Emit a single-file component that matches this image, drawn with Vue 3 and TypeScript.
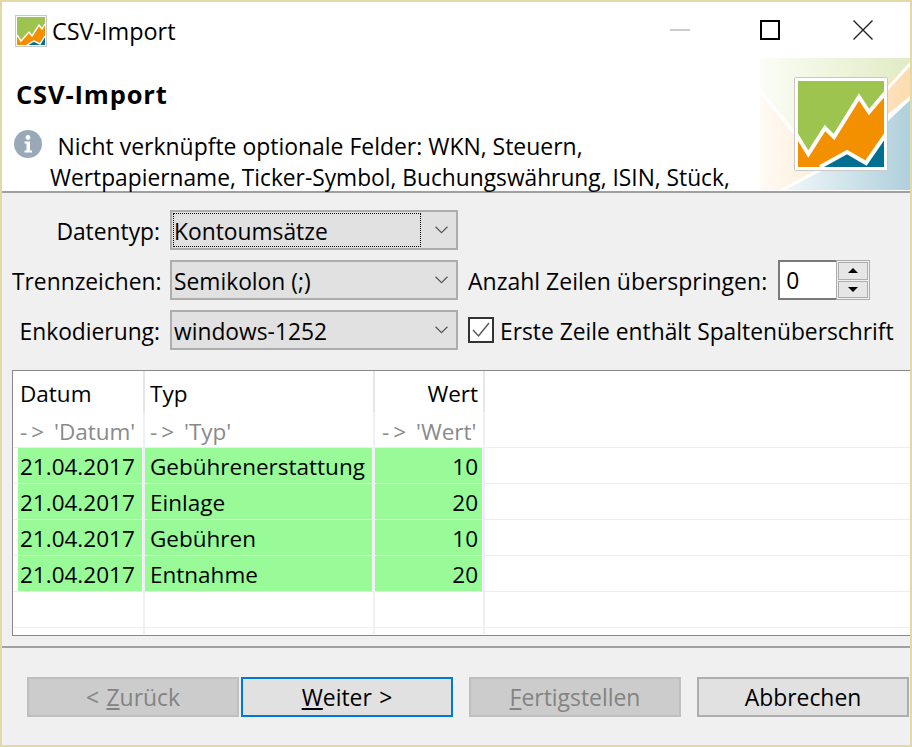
<template>
  <div class="dialog">
    <div class="titlebar">
      <svg class="app-icon" viewBox="0 0 32 32">
        <rect x="0.5" y="0.5" width="31" height="31" fill="#fff" stroke="#c8c8c8" />
        <svg x="2" y="2" width="28" height="28" viewBox="0 0 28 28">
          <rect width="28" height="28" fill="#9cc44e" />
          <path d="M0 18 L4 24 L12 15 L15 19 L22 8 L25 12 L28 7 V28 H0 Z" fill="#f39000" />
          <path d="M10 28 L17 24 L23 27 L28 19 V28 Z" fill="#006f91" />
          <path d="M0 18 L4 24 L12 15 L15 19 L22 8 L25 12 L28 7 M10 28 L17 24 L23 27 L28 19" fill="none" stroke="#fff" stroke-width="1.4" />
        </svg>
      </svg>
      <span class="window-title">CSV-Import</span>
      <div class="window-buttons">
        <span class="win-min"></span>
        <span class="win-max"></span>
        <svg class="win-close" viewBox="0 0 20 20">
          <path d="M0.5 0.5 L19.5 19.5 M19.5 0.5 L0.5 19.5" stroke="#222" stroke-width="1.4" fill="none" />
        </svg>
      </div>
    </div>

    <div class="header">
      <div class="header-text">
        <h1>CSV-Import</h1>
        <div class="message">
          <svg class="info-icon" viewBox="0 0 28 28">
            <circle cx="14" cy="14" r="14" fill="#9aa9b8" />
            <circle cx="14" cy="7.5" r="2.4" fill="#fff" />
            <path d="M10.5 11.5 H16 V20.5 H18 V22.5 H10.5 V20.5 H12.5 V13.5 H10.5 Z" fill="#fff" />
          </svg>
          <p>Nicht verknüpfte optionale Felder: WKN, Steuern,<br />Wertpapiername, Ticker-Symbol, Buchungswährung, ISIN, Stück,</p>
        </div>
      </div>
      <svg class="banner" viewBox="0 0 150 132" preserveAspectRatio="none">
        <defs>
          <linearGradient id="bannerGreen" x1="0" y1="0" x2="1" y2="0">
            <stop offset="0" stop-color="#fbfdf6" />
            <stop offset="1" stop-color="#e0ecc4" />
          </linearGradient>
          <linearGradient id="bannerOrange" x1="0" y1="0" x2="1" y2="0">
            <stop offset="0" stop-color="#fffaf4" />
            <stop offset="1" stop-color="#fcdcb0" />
          </linearGradient>
          <linearGradient id="bannerBlue" x1="0" y1="0" x2="1" y2="0">
            <stop offset="0" stop-color="#f2f8fa" />
            <stop offset="1" stop-color="#afd0dc" />
          </linearGradient>
        </defs>
        <rect width="150" height="132" fill="#fff" />
        <path d="M0 0 H150 V5 L100 60 L40 80 L0 30 Z" fill="url(#bannerGreen)" />
        <path d="M0 36 L40 84 L150 8 V38 L60 112 L22 132 H0 Z" fill="url(#bannerOrange)" />
        <path d="M23 132 L60 112 L128 63 L150 42 V132 Z" fill="url(#bannerBlue)" />
        <path d="M0 33 L40 82 L110 50 L150 6 M22 132 L60 112 L128 60 L150 40" fill="none" stroke="#fff" stroke-width="3" />
      </svg>
      <div class="banner-logo">
        <svg viewBox="0 0 94 94">
          <rect x="0.5" y="0.5" width="93" height="93" rx="1" fill="#fff" stroke="#c8c8c8" />
          <svg x="4" y="4" width="86" height="86" viewBox="0 0 86 86">
            <rect width="86" height="86" fill="#9cc44e" />
            <path d="M0 56 L10.3 73 L27 47 L36 56 L61 16 L71 31 L88 11 V86 H0 Z" fill="#f39000" />
            <path d="M22 86 L49 71 L68 82 L88 53 V86 Z" fill="#006f91" />
            <path d="M-2 53 L10.3 73 L27 47 L36 56 L61 16 L71 31 L88 11 M22 86 L49 71 L68 82 L88 53" fill="none" stroke="#fff" stroke-width="4" />
          </svg>
        </svg>
      </div>
    </div>

    <div class="content">
      <div class="form">
        <label class="field-label">Datentyp:</label>
        <div class="combo">
          <span class="combo-value focused">Kontoumsätze</span>
          <svg class="chevron" viewBox="0 0 12 7"><path d="M0.5 0.5 L6 6 L11.5 0.5" /></svg>
        </div>
        <div></div>

        <label class="field-label">Trennzeichen:</label>
        <div class="combo">
          <span class="combo-value">Semikolon (;)</span>
          <svg class="chevron" viewBox="0 0 12 7"><path d="M0.5 0.5 L6 6 L11.5 0.5" /></svg>
        </div>
        <div class="option">
          <span class="skip-label">Anzahl Zeilen überspringen:</span>
          <div class="spinner">
            <span class="spinner-value">0</span>
            <div class="spinner-buttons">
              <span class="spin-btn"><i class="arrow-up"></i></span>
              <span class="spin-btn"><i class="arrow-down"></i></span>
            </div>
          </div>
        </div>

        <label class="field-label">Enkodierung:</label>
        <div class="combo">
          <span class="combo-value">windows-1252</span>
          <svg class="chevron" viewBox="0 0 12 7"><path d="M0.5 0.5 L6 6 L11.5 0.5" /></svg>
        </div>
        <div class="option check-option">
          <svg class="checkbox" viewBox="0 0 26 26">
            <rect x="1" y="1" width="24" height="24" fill="#fff" stroke="#333" stroke-width="2" />
            <path d="M5 13 L10.5 19 L21 6" fill="none" stroke="#555" stroke-width="1.4" />
          </svg>
          <span class="check-label">Erste Zeile enthält Spaltenüberschrift</span>
        </div>
      </div>

      <div class="table">
        <div class="row head">
          <div v-for="col in columns" :key="col.name" class="cell" :class="{ right: col.right }">{{ col.name }}</div>
          <div class="cell filler"></div>
        </div>
        <div class="row mapping">
          <div v-for="col in columns" :key="col.name" class="cell" :class="{ right: col.right }">
            <span class="arrow">-&gt;</span> '{{ col.name }}'
          </div>
          <div class="cell filler"></div>
        </div>
        <div v-for="row in rows" :key="row.typ" class="row data">
          <div class="cell"><span class="ok">{{ row.datum }}</span></div>
          <div class="cell"><span class="ok">{{ row.typ }}</span></div>
          <div class="cell right"><span class="ok">{{ row.wert }}</span></div>
          <div class="cell filler"></div>
        </div>
        <div class="row data">
          <div class="cell"></div>
          <div class="cell"></div>
          <div class="cell"></div>
          <div class="cell filler"></div>
        </div>
        <div class="row tail">
          <div class="cell"></div>
          <div class="cell"></div>
          <div class="cell"></div>
          <div class="cell filler"></div>
        </div>
      </div>
    </div>

    <div class="footer">
      <button class="btn disabled" type="button">&lt; <u>Z</u>urück</button>
      <button class="btn primary" type="button"><u>W</u>eiter &gt;</button>
      <button class="btn disabled spaced" type="button"><u>F</u>ertigstellen</button>
      <button class="btn spaced" type="button">Abbrechen</button>
    </div>
  </div>
</template>

<script setup lang="ts">
const columns = [
  { name: 'Datum', right: false },
  { name: 'Typ', right: false },
  { name: 'Wert', right: true },
]

const rows = [
  { datum: '21.04.2017', typ: 'Gebührenerstattung', wert: '10' },
  { datum: '21.04.2017', typ: 'Einlage', wert: '20' },
  { datum: '21.04.2017', typ: 'Gebühren', wert: '10' },
  { datum: '21.04.2017', typ: 'Entnahme', wert: '20' },
]
</script>

<style>
html,
body {
  margin: 0;
  background: #f0f0f0;
}
</style>

<style scoped>
.dialog {
  box-sizing: border-box;
  width: 912px;
  height: 747px;
  display: flex;
  flex-direction: column;
  border: 2px solid #e2d9a9;
  background: #f0f0f0;
  color: #000;
  font-family: 'Open Sans', 'Noto Sans', sans-serif;
  font-size: 22.8px;
  overflow: hidden;
}

.titlebar {
  height: 56px;
  display: flex;
  align-items: center;
  background: #fff;
  padding-left: 13px;
  flex-shrink: 0;
}

.app-icon {
  width: 32px;
  height: 32px;
  margin-right: 5px;
  margin-top: 2px;
}

.window-title {
  margin-top: 1px;
  font-size: 23.4px;
}

.window-buttons {
  margin-left: auto;
  display: flex;
  align-items: center;
  height: 100%;
}

.win-min {
  width: 20px;
  height: 2px;
  background: #ccc;
  margin-right: 70px;
}

.win-max {
  box-sizing: border-box;
  width: 20px;
  height: 20px;
  border: 2px solid #000;
  margin-right: 73px;
}

.win-close {
  width: 20px;
  height: 20px;
  margin-right: 37px;
}

.header {
  position: relative;
  height: 133px;
  background: #fff;
  border-bottom: 2px solid #a0a0a0;
  display: flex;
  align-items: flex-start;
  flex-shrink: 0;
}

.header-text {
  flex: 1;
  padding-left: 12px;
  min-width: 0;
}

.header-text h1 {
  margin: 17px 0 0 2px;
  font-size: 25.5px;
  line-height: 38px;
  font-weight: 700;
  letter-spacing: 0.85px;
}

.message {
  display: flex;
  margin-top: 17px;
  height: 56px;
}

.info-icon {
  width: 28px;
  height: 28px;
  flex-shrink: 0;
}

.message p {
  margin: 0 0 0 -28px;
  padding-left: 36px;
  text-indent: 7.5px;
  font-size: 22.75px;
  line-height: 32px;
  white-space: nowrap;
}

.message p::first-line {
  font-size: 22.95px;
}

.banner {
  width: 150px;
  height: 132px;
  display: block;
  flex-shrink: 0;
}

.banner-logo {
  position: absolute;
  right: 22px;
  top: 19px;
  width: 94px;
  height: 94px;
}

.banner-logo > svg {
  display: block;
  width: 94px;
  height: 94px;
}

.content {
  padding: 17px 0 0 10px;
  flex-shrink: 0;
}

.form {
  display: grid;
  grid-template-columns: 148px 288px 1fr;
  grid-auto-rows: 40px;
  column-gap: 10px;
  row-gap: 10px;
  align-items: center;
}

.field-label {
  text-align: right;
  white-space: nowrap;
  padding-top: 2px;
}

.combo {
  box-sizing: border-box;
  height: 40px;
  display: flex;
  align-items: center;
  justify-content: space-between;
  background: #e1e1e1;
  border: 2px solid #adadad;
  padding: 0 8px 0 1px;
}

.combo-value {
  padding: 2px 1px 0;
  white-space: nowrap;
}

.combo-value.focused {
  box-sizing: border-box;
  width: 248px;
  height: 34px;
  padding-top: 0;
  line-height: 38px;
  outline: 1px dotted #000;
  outline-offset: -1px;
}

.chevron {
  width: 13px;
  height: 8px;
  fill: none;
  stroke: #555;
  stroke-width: 1.1;
}

.option {
  display: flex;
  align-items: center;
  white-space: nowrap;
}

.skip-label {
  font-size: 23px;
  padding-top: 2px;
}

.check-label {
  font-size: 22.8px;
  padding-top: 2px;
}

.spinner {
  box-sizing: border-box;
  height: 40px;
  width: 92px;
  margin-left: 11px;
  display: flex;
  background: #fff;
  border: 2px solid #7a7a7a;
  border-right: 0;
}

.spinner-value {
  box-sizing: border-box;
  width: 56px;
  padding-left: 6px;
  line-height: 38px;
}

.spinner-buttons {
  box-sizing: border-box;
  flex: 1;
  display: flex;
  flex-direction: column;
  background: #f0f0f0;
  border: 1px solid #adadad;
  margin: -2px 0;
  padding: 1px 1px;
  gap: 1px;
  min-width: 0;
}

.spin-btn {
  flex: 1;
  display: flex;
  align-items: center;
  justify-content: center;
  background: #e6e6e6;
  border: 1px solid #adadad;
}

.arrow-up {
  width: 0;
  height: 0;
  border: 5px solid transparent;
  border-top: 0;
  border-bottom: 5px solid #000;
}

.arrow-down {
  width: 0;
  height: 0;
  border: 5px solid transparent;
  border-bottom: 0;
  border-top: 5px solid #000;
}

.check-option {
  gap: 6px;
}

.checkbox {
  width: 26px;
  height: 26px;
  flex-shrink: 0;
}

.table {
  box-sizing: border-box;
  margin-top: 20px;
  height: 266px;
  background: #fff;
  border: 1px solid #888;
  border-right: 0;
  overflow: hidden;
  font-size: 22.5px;
}

.row {
  display: grid;
  grid-template-columns: 132px 230px 110px 1fr;
}

.cell {
  box-sizing: border-box;
  height: 100%;
  border-right: 2px solid #edf0f5;
  white-space: nowrap;
  min-width: 0;
}

.cell.filler {
  border-right: 0;
}

.right {
  text-align: right;
}

.head {
  height: 41px;
}

.head .cell {
  padding: 5px 5px 0 7px;
  line-height: 36px;
  border-right-color: #e6e6e6;
}

.head .cell:nth-child(2),
.mapping .cell:nth-child(2) {
  padding-left: 5px;
}

.mapping {
  box-sizing: border-box;
  height: 36px;
  border-bottom: 1px solid #eee;
}

.mapping .cell {
  padding: 0 8px 0 7px;
  color: #8a8a8a;
  line-height: 39px;
}

.arrow {
  letter-spacing: 4px;
}

.data {
  box-sizing: border-box;
  height: 36px;
  border-bottom: 1px solid #eee;
}

.tail {
  height: 6px;
}

.data .cell {
  padding-right: 1px;
}

.data .cell:first-child {
  padding-left: 5px;
}

.ok {
  display: block;
  height: 35px;
  line-height: 38px;
  background: #98fb98;
  padding: 0 4px 0 2px;
}

.data .cell:nth-child(2) .ok {
  padding-left: 5px;
}

.footer {
  margin-top: 10px;
  flex: 1;
  border-top: 2px solid #a0a0a0;
  padding: 29px 1px 0 25px;
  display: flex;
  align-items: flex-start;
  gap: 2px;
}

.btn {
  box-sizing: border-box;
  width: 212px;
  height: 40px;
  padding: 1px 0 0;
  font: inherit;
  font-size: 22.9px;
  word-spacing: 1.5px;
  background: #e1e1e1;
  border: 2px solid #adadad;
  color: #000;
}

.btn.primary {
  border-color: #0078d7;
}

.btn.disabled {
  background: #cccccc;
  border-color: #bfbfbf;
  color: #838383;
}

.btn.spaced {
  margin-left: 14px;
}
</style>
